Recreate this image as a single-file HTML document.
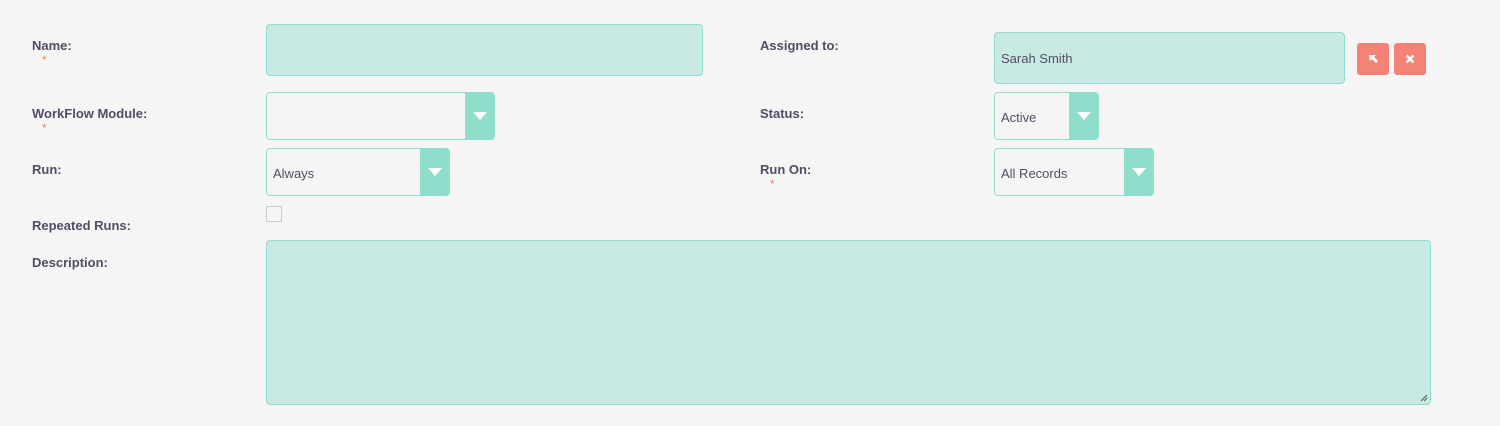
<!DOCTYPE html>
<html><head><style>
body{margin:0;width:1500px;height:426px;background:#f5f5f5;font-family:"Liberation Sans",sans-serif;position:relative;overflow:hidden}
.l{position:absolute;font-weight:bold;font-size:13px;color:#534d64}
.s{position:absolute;color:#f08377;font-size:12px}
.in{position:absolute;box-sizing:border-box;border:1px solid #8fdecb;border-radius:4px;background:#c9eae4}
.sel{position:absolute;box-sizing:border-box;border:1px solid #8fdecb;border-radius:4px;background:#f5f5f5;font-size:13px;color:#534d64;padding-left:6px;overflow:hidden}
.sel .a{position:absolute;right:0;top:0;bottom:0;width:29px;background:#8fdecb}
.sel .a:after{content:"";position:absolute;left:8px;top:19px;border-left:7px solid transparent;border-right:7px solid transparent;border-top:8px solid #fff}
.btn{position:absolute;width:32px;height:32px;background:#f58277;border-radius:3px;top:43px}
</style></head><body>
<div class="l" style="left:32px;top:38px">Name:</div><div class="s" style="left:42px;top:53px">*</div>
<div class="l" style="left:32px;top:106px">WorkFlow Module:</div><div class="s" style="left:42px;top:121px">*</div>
<div class="l" style="left:32px;top:162px">Run:</div>
<div class="l" style="left:32px;top:218px">Repeated Runs:</div>
<div class="l" style="left:32px;top:255px">Description:</div>
<div class="l" style="left:760px;top:38px">Assigned to:</div>
<div class="l" style="left:760px;top:106px">Status:</div>
<div class="l" style="left:760px;top:162px">Run On:</div><div class="s" style="left:770px;top:177px">*</div>

<div class="in" style="left:266px;top:24px;width:437px;height:52px"></div>
<div class="sel" style="left:266px;top:92px;width:229px;height:48px"><div class="a"></div></div>
<div class="sel" style="left:266px;top:148px;width:184px;height:48px;line-height:50px">Always<div class="a"></div></div>
<div style="position:absolute;left:266px;top:206px;width:14px;height:14px;border:1px solid #c5cdd1;background:#f5f5f5"></div>
<div class="in" style="left:266px;top:240px;width:1165px;height:165px"><svg style="position:absolute;right:2px;bottom:2px" width="8" height="8"><path d="M1 7L7 1M4 7L7 4" stroke="#555" stroke-width="1"/></svg></div>

<div class="in" style="left:994px;top:32px;width:351px;height:52px;font-size:13px;color:#534d64;line-height:52px;padding-left:6px">Sarah Smith</div>
<div class="btn" style="left:1357px"><svg width="32" height="32"><path d="M12 12h7l-2 2 4 4-2 2-4-4-2 2z" fill="#fff"/></svg></div>
<div class="btn" style="left:1394px"><svg width="32" height="32"><path d="M12.5 12.5l7 7M19.5 12.5l-7 7" stroke="#fff" stroke-width="2.4"/></svg></div>
<div class="sel" style="left:994px;top:92px;width:105px;height:48px;line-height:50px">Active<div class="a"></div></div>
<div class="sel" style="left:994px;top:148px;width:160px;height:48px;line-height:50px">All Records<div class="a"></div></div>
</body></html>
